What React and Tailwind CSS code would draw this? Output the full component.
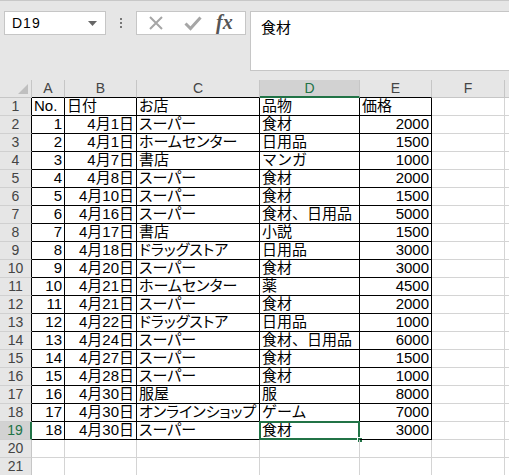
import React from "react";

const cols = [
  { name: "A", w: "w-[33px]" },
  { name: "B", w: "w-[72px]" },
  { name: "C", w: "w-[123px]" },
  { name: "D", w: "w-[100px]" },
  { name: "E", w: "w-[72px]" },
  { name: "F", w: "w-[73px]" },
];

const rows = [
  [1, "4月1日", "スーパー", "食材", 2000],
  [2, "4月1日", "ホームセンター", "日用品", 1500],
  [3, "4月7日", "書店", "マンガ", 1000],
  [4, "4月8日", "スーパー", "食材", 2000],
  [5, "4月10日", "スーパー", "食材", 1500],
  [6, "4月16日", "スーパー", "食材、日用品", 5000],
  [7, "4月17日", "書店", "小説", 1500],
  [8, "4月18日", "ドラッグストア", "日用品", 3000],
  [9, "4月20日", "スーパー", "食材", 3000],
  [10, "4月21日", "ホームセンター", "薬", 4500],
  [11, "4月21日", "スーパー", "食材", 2000],
  [12, "4月22日", "ドラッグストア", "日用品", 1000],
  [13, "4月24日", "スーパー", "食材、日用品", 6000],
  [14, "4月27日", "スーパー", "食材", 1500],
  [15, "4月28日", "スーパー", "食材", 1000],
  [16, "4月30日", "服屋", "服", 8000],
  [17, "4月30日", "オンラインショップ", "ゲーム", 7000],
  [18, "4月30日", "スーパー", "食材", 3000],
];

const cellFont = { fontFamily: '"Liberation Sans", "Noto Sans CJK JP", sans-serif' };

const FormulaBar = () => (
  <div className="h-[80px] bg-[#e6e6e6] border-t border-[#c8c8c8] flex items-start pt-[10px] relative">
    {/* name box */}
    <div className="ml-[4px] w-[102px] h-[24px] bg-white border border-[#c6c6c6] flex items-center justify-between pl-[7px] pr-[8px]">
      <span className="text-[14px] text-black tracking-[1px]" style={cellFont}>D19</span>
      <svg width="9" height="5" viewBox="0 0 9 5">
        <path d="M0 0 L9 0 L4.5 5 Z" fill="#666" />
      </svg>
    </div>
    {/* dots */}
    <div className="w-[30px] h-[24px] flex flex-col items-center justify-center gap-[2px]">
      <span className="w-[2px] h-[2px] bg-[#777]" />
      <span className="w-[2px] h-[2px] bg-[#777]" />
      <span className="w-[2px] h-[2px] bg-[#777]" />
    </div>
    {/* cancel / enter / fx */}
    <div className="w-[110px] h-[24px] bg-white border border-[#c6c6c6] flex items-center">
      <svg className="ml-[11px]" width="16" height="16" viewBox="0 0 16 16">
        <path d="M2 2 L14 14 M14 2 L2 14" stroke="#a6a6a6" strokeWidth="2" />
      </svg>
      <svg className="ml-[20px]" width="18" height="16" viewBox="0 0 18 16">
        <path d="M1.5 8.5 L6.5 13.5 L16.5 2.5" stroke="#a6a6a6" strokeWidth="3" fill="none" />
      </svg>
      <span
        className="ml-[14px] text-[20px] italic font-bold text-[#555] leading-none -mt-[2px]"
        style={{ fontFamily: '"Liberation Serif", serif' }}
      >
        fx
      </span>
    </div>
    {/* formula input */}
    <div className="ml-[4px] flex-1 h-[60px] bg-white border border-r-0 border-[#c6c6c6] pl-[10px] pt-[3px]">
      <span className="text-[15px] text-black" style={cellFont}>食材</span>
    </div>
  </div>
);

const HeaderRow = () => (
  <div className="flex h-[18px] bg-[#e6e6e6]">
    <div className="w-[32px] h-full border-r border-b border-[#c6c6c6] relative">
      <svg className="absolute right-[3px] bottom-[3px]" width="10" height="10" viewBox="0 0 10 10">
        <path d="M10 0 L10 10 L0 10 Z" fill="#bfbfbf" />
      </svg>
    </div>
    {cols.map((c) => {
      const sel = c.name === "D";
      const inTable = c.name !== "F";
      return (
        <div
          key={c.name}
          className={`${c.w} h-full flex items-center justify-center text-[14px] border-r border-[#c6c6c6] ${
            sel
              ? "bg-[#d2d2d2] text-[#217346] border-b-2 border-b-[#217346]"
              : inTable
              ? "text-[#444] border-b border-b-black"
              : "text-[#444] border-b border-b-[#c6c6c6]"
          }`}
          style={{ fontFamily: '"Liberation Sans", sans-serif' }}
        >
          {c.name}
        </div>
      );
    })}
    <div className="flex-1 h-full border-b border-[#c6c6c6]" />
  </div>
);

const RowHeader = ({ n, inTable, sel }) => (
  <div
    className={`w-[32px] h-full flex items-center justify-center text-[14px] border-b border-[#d0d0d0] ${
      sel
        ? "bg-[#d2d2d2] text-[#217346] border-r-2 border-r-[#217346]"
        : inTable
        ? "bg-[#e6e6e6] text-[#444] border-r border-r-black"
        : "bg-[#e6e6e6] text-[#444] border-r border-r-[#c6c6c6]"
    }`}
    style={{ fontFamily: '"Liberation Sans", sans-serif' }}
  >
    {n}
  </div>
);

const Cell = ({ w, inTable, right, palt, children, selected }) => (
  <div
    className={`${w} h-full flex items-center text-[15px] text-black whitespace-nowrap overflow-visible relative ${
      palt ? "[font-feature-settings:'palt']" : ""
    } ${right ? "justify-end pr-[2px]" : "pl-[2px]"} ${
      inTable ? "border-r border-b border-black" : "border-r border-b border-[#d4d4d4]"
    }`}
    style={cellFont}
  >
    {children}
    {selected && (
      <>
        <div className="absolute -left-[1px] -top-[1px] -right-[1px] -bottom-[1px] border-2 border-[#217346] pointer-events-none" />
        <div className="absolute -right-[4px] -bottom-[4px] w-[6px] h-[6px] bg-[#217346] border border-white" />
      </>
    )}
  </div>
);

const App = () => {
  const all = [["No.", "日付", "お店", "品物", "価格"], ...rows];
  return (
    <div className="w-[509px] h-[475px] overflow-hidden bg-white">
      <FormulaBar />
      <HeaderRow />
      {all.map((r, i) => {
        const header = i === 0;
        return (
          <div key={i} className="flex h-[18px]">
            <RowHeader n={i + 1} inTable sel={i === 18} />
            {r.map((v, j) => (
              <Cell
                key={j}
                w={cols[j].w}
                inTable
                palt={j === 2}
                right={!header && (j === 0 || j === 1 || j === 4)}
                selected={i === 18 && j === 3}
              >
                {v}
              </Cell>
            ))}
            <Cell w="w-[73px]" />
            <div className="flex-1 h-full border-b border-[#d4d4d4]" />
          </div>
        );
      })}
      {[20, 21].map((n) => (
        <div key={n} className="flex h-[18px]">
          <RowHeader n={n} />
          {cols.map((c) => (
            <Cell key={c.name} w={c.w} />
          ))}
          <div className="flex-1 h-full border-b border-[#d4d4d4]" />
        </div>
      ))}
    </div>
  );
};

export default App;
